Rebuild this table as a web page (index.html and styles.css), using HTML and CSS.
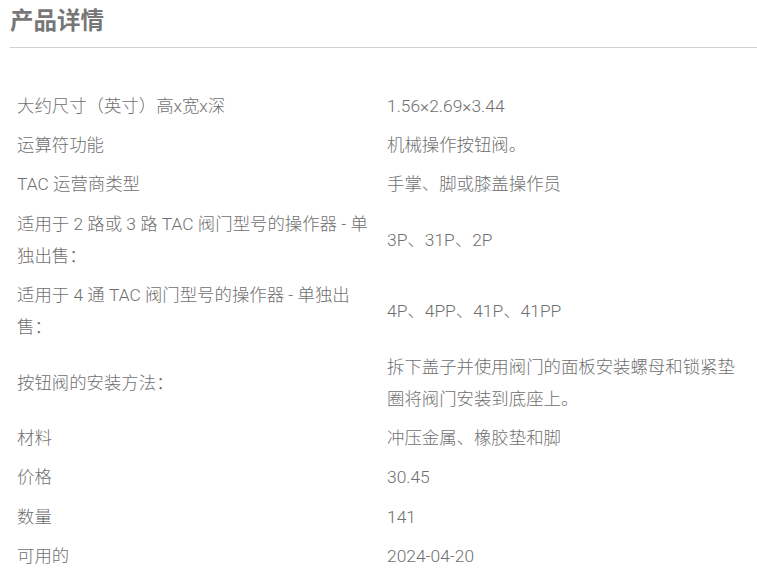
FILE: index.html
```html
<!DOCTYPE html>
<html lang="zh-CN">
<head>
<meta charset="UTF-8" />
<meta name="viewport" content="width=device-width, initial-scale=1" />
<title>产品详情</title>
<link rel="stylesheet" href="styles.css">
</head>
<body>

<section class="details">
  <h2>产品详情</h2>

  <table class="spec-table">
    <tbody>
      <tr>
        <td>大约尺寸（英寸）高x宽x深</td>
        <td>1.56×2.69×3.44</td>
      </tr>
      <tr>
        <td>运算符功能</td>
        <td>机械操作按钮阀。</td>
      </tr>
      <tr>
        <td>TAC 运营商类型</td>
        <td>手掌、脚或膝盖操作员</td>
      </tr>
      <tr>
        <td>适用于 2 路或 3 路 TAC 阀门型号的操作器 - 单独出售：</td>
        <td>3P、31P、2P</td>
      </tr>
      <tr>
        <td>适用于 4 通 TAC 阀门型号的操作器 - 单独出售：</td>
        <td>4P、4PP、41P、41PP</td>
      </tr>
      <tr>
        <td>按钮阀的安装方法：</td>
        <td>拆下盖子并使用阀门的面板安装螺母和锁紧垫圈将阀门安装到底座上。</td>
      </tr>
      <tr>
        <td>材料</td>
        <td>冲压金属、橡胶垫和脚</td>
      </tr>
      <tr>
        <td>价格</td>
        <td>30.45</td>
      </tr>
      <tr>
        <td>数量</td>
        <td>141</td>
      </tr>
      <tr>
        <td>可用的</td>
        <td>2024-04-20</td>
      </tr>
    </tbody>
  </table>
</section>

</body>
</html>
```

FILE: styles.css
```css
body {
  font-family: Roboto, "Noto Sans CJK SC", sans-serif;
  background: #fff;
  margin: 0;
  padding: 0;
  color: #777;
}
.details {
  padding: 0 0 0 10px;
}
.details h2 {
  margin: 0;
  padding: 7px 0 11px;
  font-size: 23.5px;
  line-height: 29px;
  font-weight: 700;
  color: #777;
  border-bottom: 1px solid #d0d0d0;
}
.spec-table {
  width: 100%;
  margin-top: 38px;
  border-collapse: collapse;
  table-layout: fixed;
}
.spec-table td {
  font-size: 17.4px;
  line-height: 32px;
  font-weight: 300;
  padding: 3.7px 7px;
  vertical-align: middle;
  color: #6f6f6f;
}
.spec-table td:first-child {
  width: 356px;
}
```
